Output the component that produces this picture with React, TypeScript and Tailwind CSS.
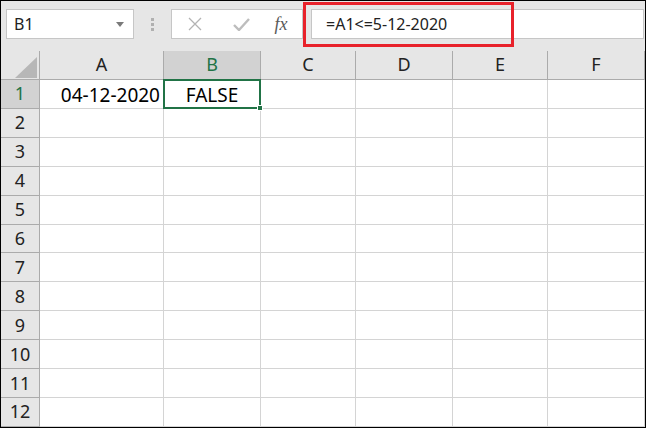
import React from 'react';

const cols = [
  { name: 'A', w: 'w-[124px]' },
  { name: 'B', w: 'w-[97px]' },
  { name: 'C', w: 'w-[95px]' },
  { name: 'D', w: 'w-[97px]' },
  { name: 'E', w: 'w-[95px]' },
  { name: 'F', w: 'flex-1' },
];

const rows = Array.from({ length: 12 }, (_, i) => i + 1);

function CornerCell() {
  return (
    <div className="relative w-[39px] shrink-0 h-full border-r border-b border-[#ababab] bg-[#e6e6e6]">
      <svg className="absolute left-[14px] top-[6px]" width="22" height="21" viewBox="0 0 22 21">
        <polygon points="22,0 22,21 0,21" fill="#b7b7b7" />
      </svg>
    </div>
  );
}

function Toolbar() {
  return (
    <div className="h-[50px] flex items-start pt-[8px] bg-[#e6e6e6] relative">
      {/* name box */}
      <div className="ml-[5px] w-[128px] h-[30px] bg-white border border-[#c6c6c6] flex items-center justify-between pl-[7px] pr-[9px]">
        <span className="text-[16px] text-[#222] leading-none">B1</span>
        <svg width="8" height="5" viewBox="0 0 8 5">
          <polygon points="0,0 8,0 4,5" fill="#7a7a7a" />
        </svg>
      </div>
      {/* grip dots */}
      <div className="w-[37px] h-[30px] flex flex-col items-center justify-center gap-[2px]">
        <div className="w-[3px] h-[3px] bg-[#b0b0b0]" />
        <div className="w-[3px] h-[3px] bg-[#b0b0b0]" />
        <div className="w-[3px] h-[3px] bg-[#b0b0b0]" />
      </div>
      {/* buttons */}
      <div className="w-[132px] h-[30px] bg-white border border-[#c6c6c6] flex items-center">
        <div className="w-[44px] flex justify-center pl-[2px]">
          <svg width="14" height="14" viewBox="0 0 14 14">
            <path d="M1 1 L13 13 M13 1 L1 13" stroke="#b3b3b3" strokeWidth="1.3" fill="none" />
          </svg>
        </div>
        <div className="w-[46px] flex justify-center pl-[4px]">
          <svg width="17" height="13" viewBox="0 0 17 13">
            <path d="M1 7 L6 12 L16 1" stroke="#bdbdbd" strokeWidth="2.4" fill="none" />
          </svg>
        </div>
        <div className="flex-1 flex justify-center pr-[2px]">
          <span className="text-[18px] italic text-[#595959] leading-none font-['Liberation_Serif',serif]">fx</span>
        </div>
      </div>
      {/* formula input */}
      <div className="ml-[8px] flex-1 h-[30px] bg-white border border-[#c6c6c6] flex items-center pl-[14px] mr-[1px]">
        <span className="text-[16px] text-[#222] leading-none">=A1&lt;=5-12-2020</span>
      </div>
      {/* highlight annotation */}
      <div className="absolute left-[302px] top-[1px] w-[211px] h-[45px] border-[3px] border-[#e8222b]" />
    </div>
  );
}

function HeaderRow() {
  return (
    <div className="flex h-[29px]">
      <CornerCell />
      {cols.map((c) => (
        <div
          key={c.name}
          className={`${c.w} shrink-0 h-full border-r border-b border-[#ababab] flex items-center justify-center text-[18px] ${
            c.name === 'B' ? 'bg-[#d2d2d2] text-[#217346]' : 'bg-[#e6e6e6] text-[#222]'
          }`}
        >
          {c.name}
        </div>
      ))}
    </div>
  );
}

function Row({ n }: { n: number }) {
  const sel = n === 1;
  return (
    <div className={`flex h-[29px] ${sel ? 'relative z-10' : ''}`}>
      <div
        className={`w-[39px] shrink-0 h-full border-r border-b border-[#ababab] flex items-center justify-center text-[18px] ${
          sel ? 'bg-[#d2d2d2] text-[#217346]' : 'bg-[#e6e6e6] text-[#222]'
        }`}
      >
        {n}
      </div>
      {cols.map((c) => (
        <div
          key={c.name}
          className={`${c.w} shrink-0 h-full border-r border-b border-[#d4d4d4] bg-white flex items-center text-[19px] text-black ${
            c.name === 'A' ? 'justify-end pr-[3px]' : 'justify-center'
          } ${sel && c.name === 'B' ? 'relative z-10' : ''}`}
        >
          {sel && c.name === 'A' && <span className="pt-[2px]">04-12-2020</span>}
          {sel && c.name === 'B' && (
            <>
              <span className="pt-[2px]">FALSE</span>
              <div className="absolute -left-[1px] -top-[1px] -right-[1px] -bottom-[1px] border-2 border-[#217346]" />
              <div className="absolute -right-[3px] -bottom-[3px] w-[6px] h-[6px] bg-[#217346] border border-white" />
            </>
          )}
        </div>
      ))}
    </div>
  );
}

export default function App() {
  return (
    <div className="w-[646px] h-[428px] border border-black bg-[#e6e6e6] overflow-hidden font-['Noto_Sans',sans-serif] flex flex-col">
      <Toolbar />
      <HeaderRow />
      {rows.map((n) => (
        <Row key={n} n={n} />
      ))}
    </div>
  );
}
